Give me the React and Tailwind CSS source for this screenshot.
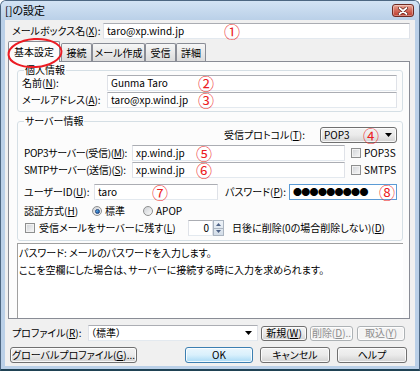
import React from 'react';

// 「[]の設定」ダイアログ (Vista 風)
const JP = "font-['Noto_Sans_CJK_JP','Liberation_Sans',sans-serif] [font-feature-settings:'palt']";

function K({ k }) {
  return <span className="underline underline-offset-[1px]">{k}</span>;
}

function Mark({ n, pos }) {
  return (
    <span className={`absolute top-[-1px] text-[16px] leading-[16px] text-[#ec1c24] font-['Noto_Sans_CJK_JP',sans-serif] ${pos}`}>{n}</span>
  );
}

function Field({ value, mark, pos, className = '', focus = false, children }) {
  const border = focus
    ? 'border-[#5b9bd5]'
    : 'border-[#abadb3] border-x-[#dfe2e8] border-b-[#e3e9ef]';
  return (
    <div className={`relative h-[16px] bg-white border ${border} flex items-center pl-[3px] text-[10px] leading-[12px] ${className}`}>
      {children || <span>{value}</span>}
      {mark && <Mark n={mark} pos={pos} />}
    </div>
  );
}

function Check({ className = '' }) {
  return <span className={`block shrink-0 w-[10px] h-[10px] border border-[#8e8f8f] bg-gradient-to-br from-[#cfd2d6] to-[#f8f8f8] shadow-[inset_0_0_0_1px_#f2f2f2] ${className}`} />;
}

function Radio({ on }) {
  return (
    <span className="shrink-0 w-[10px] h-[10px] rounded-full border border-[#8e8f8f] bg-gradient-to-br from-[#cfd2d6] to-[#fafafa] flex items-center justify-center">
      {on && <span className="w-[5px] h-[5px] rounded-full bg-gradient-to-br from-[#6cc0f5] to-[#0f4f9e] border border-[#1b3f7a]" />}
    </span>
  );
}

function Arrow() {
  return (
    <svg width="7" height="4" viewBox="0 0 7 4" className="shrink-0">
      <path d="M0 0h7L3.5 4z" fill="#000" />
    </svg>
  );
}

function Btn({ children, className = '', def = false, disabled = false }) {
  let look = 'border-[#707070] bg-gradient-to-b from-[#f2f2f2] via-[#ebebeb] to-[#d2d2d2] text-black';
  if (def) look = 'border-[#3c7fb1] bg-gradient-to-b from-[#eaf6fd] via-[#d9f0fc] to-[#a7d9f5] text-black';
  if (disabled) look = 'border-[#adb2b5] bg-[#f4f4f4] text-[#8d8d8d]';
  return (
    <div className={`border rounded-[3px] shadow-[inset_0_0_0_1px_rgba(255,255,255,0.8)] flex items-center justify-center text-[10px] leading-[12px] ${look} ${className}`}>
      <span>{children}</span>
    </div>
  );
}

function Tab({ children, className = '' }) {
  return (
    <div className={`h-[18px] border border-b-0 border-[#898c95] rounded-t-[2px] bg-gradient-to-b from-[#f6f6f6] to-[#dcdcdc] flex items-center justify-center text-[10px] leading-[12px] ${className}`}>
      {children}
    </div>
  );
}

export default function App() {
  return (
    <div className={`w-[420px] h-[371px] bg-[#bad0e8] border border-[#4d6782] border-b-2 border-b-[#1f4254] rounded-t-[6px] flex flex-col overflow-hidden whitespace-nowrap text-black ${JP}`}>
      {/* タイトルバー */}
      <div className="h-[19px] shrink-0 flex items-start justify-between pl-[4px] pr-[5px] bg-gradient-to-b from-[#d3e3f4] to-[#bad0e8]">
        <span className="text-[11px] leading-[19px]">[]の設定</span>
        <div className="mt-[3px] w-[22px] h-[13px] rounded-[3px] border border-[#6e2a22] bg-gradient-to-b from-[#eaa898] via-[#d26a5b] to-[#bd3a2b] shadow-[inset_0_0_0_1px_rgba(255,255,255,0.35)] flex items-center justify-center">
          <svg width="10" height="8" viewBox="0 0 10 8">
            <path d="M1.5 1l7 6M8.5 1l-7 6" stroke="#5a1e18" strokeWidth="3.2" strokeLinecap="round" />
            <path d="M1.5 1l7 6M8.5 1l-7 6" stroke="#fff" strokeWidth="1.8" strokeLinecap="round" />
          </svg>
        </div>
      </div>

      {/* クライアント */}
      <div className="flex-1 mx-[4px] mb-[3px] bg-[#f0f0f0] flex flex-col pl-[3px] pr-[5px]">
        <div className="mt-[3px] h-[16px] flex items-center text-[10px] leading-[12px]">
          <span className="ml-[4px] w-[91px] shrink-0">メールボックス名(<K k="X" />):</span>
          <Field className="flex-1" value="taro@xp.wind.jp" mark="①" pos="left-[120px]" />
        </div>

        {/* タブ */}
        <div className="mt-[2px] h-[20px] flex items-end relative z-10">
          <div className="relative w-[52px] h-[21px] -mb-px border border-b-0 border-[#898c95] rounded-t-[2px] bg-[#fcfcfc] flex items-center justify-center text-[10px] leading-[12px]">
            基本設定
            <svg width="58" height="32" viewBox="0 0 58 32" className="absolute left-[-3px] top-[-5px]">
              <ellipse cx="29" cy="16" rx="26.5" ry="14" transform="rotate(-4 29 16)" fill="none" stroke="#ec1c24" strokeWidth="2" />
            </svg>
          </div>
          <Tab className="ml-[1px] w-[31px]">接続</Tab>
          <Tab className="w-[53px]">メール作成</Tab>
          <Tab className="w-[31px]">受信</Tab>
          <Tab className="w-[30px]">詳細</Tab>
        </div>

        {/* タブページ */}
        <div className="h-[258px] shrink-0 border border-[#898c95] bg-[#fcfcfc] flex flex-col text-[10px] leading-[12px]">
          <fieldset className="ml-[8px] mr-[6px] mt-[2px] border border-[#d5dfe5] rounded-[3px] pl-[4px] pr-[5px] pb-[3px] min-w-0">
            <legend className="ml-[2px] px-[1px] text-[10px] leading-[12px]">個人情報</legend>
            <div className="-mt-px h-[16px] flex items-center">
              <span className="w-[85px] shrink-0">名前(<K k="N" />):</span>
              <Field className="flex-1" value="Gunma Taro" mark="②" pos="left-[90px]" />
            </div>
            <div className="mt-px h-[16px] flex items-center">
              <span className="w-[85px] shrink-0">メールアドレス(<K k="A" />):</span>
              <Field className="flex-1" value="taro@xp.wind.jp" mark="③" pos="left-[90px]" />
            </div>
          </fieldset>

          <fieldset className="ml-[8px] mr-[6px] mt-[3px] border border-[#d5dfe5] rounded-[3px] pl-[6px] pr-[5px] pb-[4px] min-w-0">
            <legend className="ml-[0px] px-[1px] text-[10px] leading-[12px]">サーバー情報</legend>
            <div className="h-[16px] flex items-center justify-end">
              <span>受信プロトコル(<K k="T" />):</span>
              <div className="relative ml-[15px] w-[77px] h-[16px] border border-[#707070] rounded-[3px] bg-gradient-to-b from-[#f2f2f2] via-[#ebebeb] to-[#d2d2d2] shadow-[inset_0_0_0_1px_rgba(255,255,255,0.8)] flex items-center justify-between pl-[3px] pr-[4px]">
                <span>POP3</span>
                <Arrow />
                <Mark n="④" pos="left-[42px]" />
              </div>
            </div>
            <div className="mt-[2px] h-[16px] flex items-center">
              <span className="w-[108px] shrink-0 tracking-[-0.35px]">POP3サーバー(受信)(<K k="M" />):</span>
              <Field className="w-[213px]" value="xp.wind.jp" mark="⑤" pos="left-[63px]" />
              <Check className="ml-[6px]" />
              <span className="ml-[3px]">POP3S</span>
            </div>
            <div className="mt-px h-[16px] flex items-center">
              <span className="w-[108px] shrink-0 tracking-[-0.35px]">SMTPサーバー(送信)(<K k="S" />):</span>
              <Field className="w-[213px]" value="xp.wind.jp" mark="⑥" pos="left-[63px]" />
              <Check className="ml-[6px]" />
              <span className="ml-[3px]">SMTPS</span>
            </div>
            <div className="mt-[6px] h-[16px] flex items-center">
              <span className="w-[70px] shrink-0">ユーザーID(<K k="U" />):</span>
              <Field className="w-[124px]" value="taro" mark="⑦" pos="left-[57px]" />
              <span className="ml-[7px] w-[64px] shrink-0">パスワード(<K k="P" />):</span>
              <Field className="flex-1" focus mark="⑧" pos="left-[89px]">
                <span className="text-[9px] leading-[12px] tracking-[-0.7px]">●●●●●●●●●</span>
              </Field>
            </div>
            <div className="mt-[3px] h-[16px] flex items-center">
              <span className="w-[68px] shrink-0">認証方式(<K k="H" />)</span>
              <span className="w-[51px] flex items-center gap-[3px]"><Radio on /><span>標準</span></span>
              <span className="flex items-center gap-[3px]"><Radio /><span>APOP</span></span>
            </div>
            <div className="mt-px h-[16px] flex items-center">
              <span className="w-[164px] shrink-0 flex items-center gap-[4px] pl-[1px]">
                <Check />
                <span>受信メールをサーバーに残す(<K k="L" />)</span>
              </span>
              <div className="w-[25px] h-[16px] bg-white border border-[#abadb3] border-x-[#dfe2e8] border-b-[#e3e9ef] flex items-center justify-end pr-[3px]">0</div>
              <div className="w-[11px] h-[16px] flex flex-col border border-[#aab4c0] bg-gradient-to-b from-[#eef3f8] to-[#d3dde8]">
                <div className="flex-1 flex items-center justify-center border-b border-[#aab4c0]">
                  <svg width="5" height="3" viewBox="0 0 5 3"><path d="M0 3h5L2.5 0z" fill="#4d6185" /></svg>
                </div>
                <div className="flex-1 flex items-center justify-center">
                  <svg width="5" height="3" viewBox="0 0 5 3"><path d="M0 0h5L2.5 3z" fill="#4d6185" /></svg>
                </div>
              </div>
              <span className="ml-[8px]">日後に削除(0の場合削除しない)(<K k="D" />)</span>
            </div>
          </fieldset>

          <div className="mt-[2px] ml-[8px] mr-[6px] flex-1 border-t border-l border-[#a0a0a0] bg-white pl-px leading-[17px]">
            <div>パスワード: メールのパスワードを入力します。</div>
            <div>ここを空欄にした場合は、サーバーに接続する時に入力を求められます。</div>
          </div>
        </div>

        {/* プロファイル */}
        <div className="mt-[6px] h-[16px] flex items-center text-[10px] leading-[12px]">
          <span className="ml-[4px] w-[76px] shrink-0">プロファイル(<K k="R" />):</span>
          <div className="w-[170px] h-[16px] bg-white border border-[#abadb3] border-x-[#dfe2e8] border-b-[#e3e9ef] flex items-center justify-between pl-[2px] pr-[5px]">
            <span>（標準）</span>
            <Arrow />
          </div>
          <Btn className="ml-[3px] w-[46px] h-[15px]">新規(<K k="W" />)</Btn>
          <Btn className="ml-[3px] w-[43px] h-[15px]" disabled>削除(<K k="D" />)..</Btn>
          <Btn className="ml-[4px] w-[48px] h-[15px]" disabled>取込(<K k="Y" />)</Btn>
        </div>

        {/* ボタン */}
        <div className="mt-[6px] h-[16px] flex items-center">
          <Btn className="ml-[2px] w-[127px] h-[16px]">グローバルプロファイル(<K k="G" />)...</Btn>
          <Btn className="ml-[48px] w-[68px] h-[16px]" def>OK</Btn>
          <Btn className="ml-[7px] w-[70px] h-[16px]">キャンセル</Btn>
          <Btn className="ml-[7px] w-[70px] h-[16px]">ヘルプ</Btn>
        </div>
      </div>
    </div>
  );
}
